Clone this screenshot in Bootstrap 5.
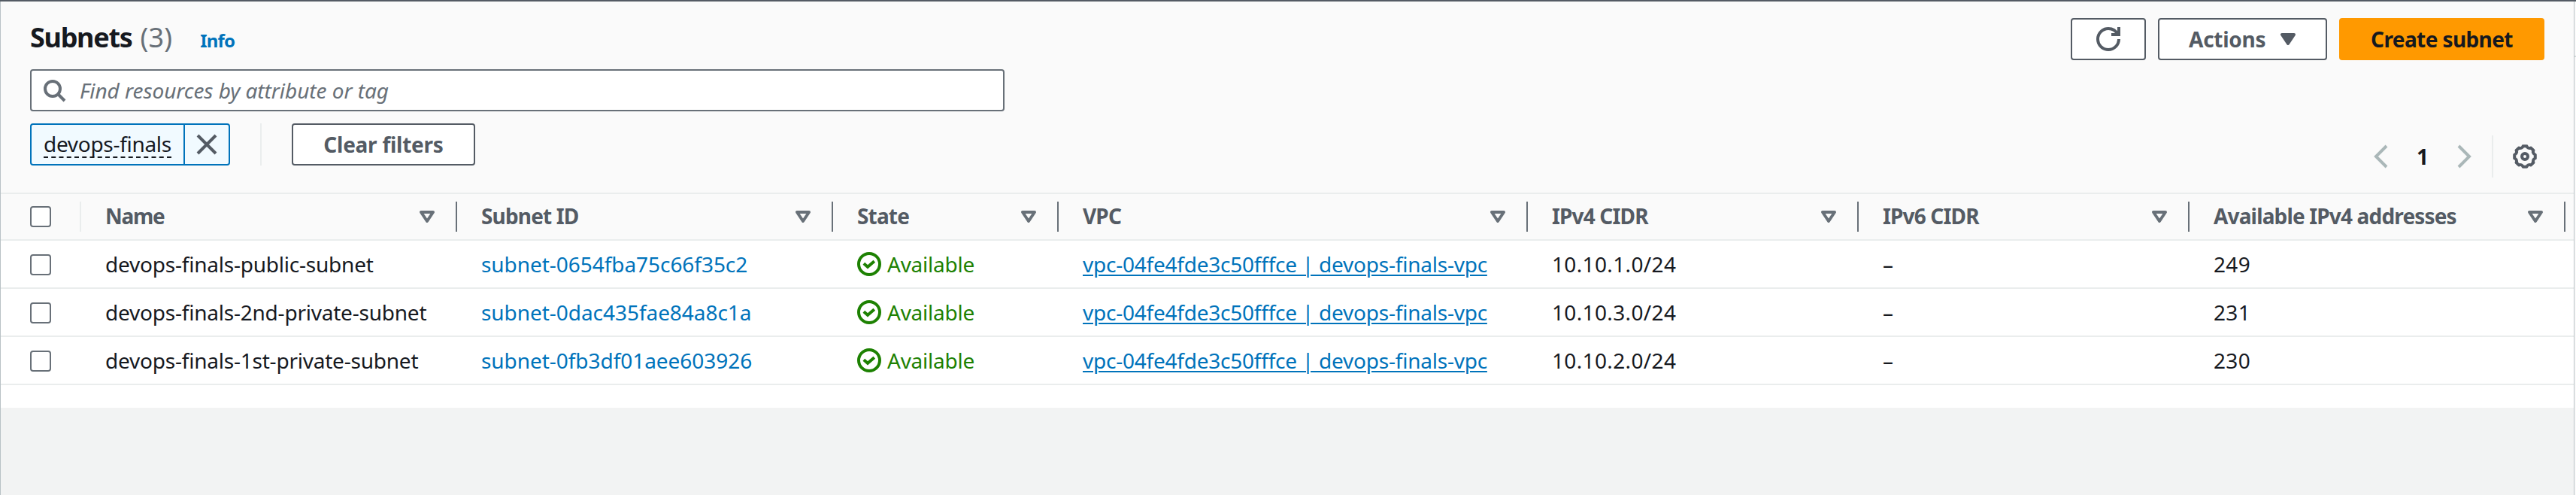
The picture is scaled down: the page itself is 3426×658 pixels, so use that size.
<!DOCTYPE html>
<html lang="en">
<head>
<meta charset="utf-8">
<meta name="viewport" content="width=device-width, initial-scale=1">
<title>Subnets</title>
<link href="https://cdn.jsdelivr.net/npm/bootstrap@5.3.0/dist/css/bootstrap.min.css" rel="stylesheet">
<style>
  :root { --ink:#16191f; --slate:#545b64; --muted:#687078; --line:#eaeded; --blue:#0073bb; --green:#1d8102; }
  body { font-family:"Noto Sans","Open Sans",sans-serif; font-size:28px; line-height:1.3; color:var(--ink); background:#fafafa; overflow:hidden; border-top:2px solid var(--slate); }
  .frame { height:656px; flex:1; background:#f2f3f3; padding:0 1px; border-left:1px solid #b9c2c6; border-right:1px solid #b9c2c6; }
  .frame { padding:0; }
  .edge { width:2px; padding-top:72px; }
  .edge i { display:block; height:2px; background:#d5dbdb; }
  .panel-head { background:#fafafa; padding:22px 39px 20px; border-bottom:2px solid var(--line); height:256px; }
  .ico { width:32px; height:32px; flex:none; fill:none; stroke:currentColor; stroke-width:2; display:block; }
  .title-line { padding-bottom:4px; height:56px; }
  .title { font-size:36px; font-weight:700; letter-spacing:-1.3px; margin:0; line-height:1.3; }
  .title-count { font-size:36px; color:var(--muted); margin-left:11px; letter-spacing:.2px; }
  .info-link { font-size:24px; font-weight:700; color:var(--blue); margin-left:37px; letter-spacing:-.8px; }
  .btn-aws { height:56px; border:2px solid var(--slate); border-radius:4px; background:#fff; color:var(--slate); font-size:28px; font-weight:700; letter-spacing:-.25px; line-height:1; padding:0 0 1px; display:flex; align-items:center; justify-content:center; }
  .btn-refresh { width:100px; padding:0; }
  .btn-actions { width:225px; justify-content:flex-start; padding-left:39px; }
  .btn-actions .ico { fill:currentColor; margin-left:14px; }
  .btn-create { width:273px; background:#f90; border-color:#f90; color:var(--ink); letter-spacing:-.6px; }
  .btn-clear { width:244px; }
  .search-box { width:1296px; height:56px; margin-top:12px; border:2px solid var(--muted); border-radius:4px; background:#fff; color:var(--muted); padding-left:14px; }
  .search-box span { font-style:italic; margin-left:18px; letter-spacing:-.06px; }
  .token { width:266px; height:56px; border:2px solid var(--blue); border-radius:4px; background:#f1faff; }
  .token-text { line-height:34px; border-bottom:2px dashed var(--ink); letter-spacing:-.3px; width:170px; margin-left:16px; white-space:nowrap; }
  .token-close { width:60px; border-left:2px solid var(--blue); color:var(--slate); }
  .rule { width:2px; height:56px; background:var(--line); }
  .filters .rule { margin:0 40px; }
  .pager { color:#aab7b8; height:56px; }
  .pager b { color:var(--ink); width:80px; text-align:center; line-height:1; padding-bottom:1px; }
  .pager .rule { margin:0 26px 0 20px; }
  .gear { color:var(--slate); margin-right:10px; }
  .grid { table-layout:fixed; width:3422px; margin:0; background:#fff; border-collapse:separate; border-spacing:0; }
  .grid th, .grid td { padding:0 0 0 32px; border-bottom:2px solid var(--line); white-space:nowrap; vertical-align:middle; }
  .grid td { height:64px; }
  .grid th { height:62px; background:#fafafa; color:var(--slate); font-weight:700; letter-spacing:-.84px; }
  .grid th:first-child, .grid td:first-child { padding-left:39px; }
  .grid th:last-child { padding-right:11px; }
  .th-text { padding-bottom:2px; }
  .th-name { letter-spacing:-1.3px; }
  .grid th .ico { color:var(--muted); margin-left:auto; margin-right:22px; }
  .sep { width:2px; height:40px; background:var(--muted); flex:none; }
  .sep-light { background:var(--line); margin-left:auto; }
  .tick { width:28px; height:28px; border:2px solid var(--muted); border-radius:4px; background:#fff; display:block; }
  td .tick { margin-top:2px; }
  .c-name { letter-spacing:-.22px; }
  .c-id { color:var(--blue); letter-spacing:-.05px; }
  .c-state { color:var(--green); letter-spacing:-.25px; }
  .c-vpc a { color:var(--blue); letter-spacing:-.23px; text-decoration-thickness:2px; text-underline-offset:3px; }
  .c-num { letter-spacing:.35px; }
  .panel-foot { height:30px; background:#fff; }
</style>
</head>
<body>
<svg class="d-none">
  <symbol id="i-sort" viewBox="0 0 16 16"><path d="M4 5h8l-4 6-4-6z" stroke-linejoin="round"/></symbol>
  <symbol id="i-check" viewBox="0 0 16 16"><circle cx="8" cy="8" r="7"/><path d="M4.4 7.6 7 9.9l4.4-3.8"/></symbol>
</svg>
<div class="d-flex">
<main class="frame">
  <header class="panel-head">
    <div class="d-flex justify-content-between">
      <div class="title-line d-flex align-items-center"><div class="d-flex align-items-baseline">
        <h1 class="title">Subnets</h1><span class="title-count">(3)</span>
        <a class="info-link text-decoration-none">Info</a>
      </div></div>
      <div class="d-flex gap-3">
        <button class="btn-aws btn-refresh" aria-label="Refresh"><svg class="ico" viewBox="0 0 16 16"><path d="M15 8c0 3.87-3.13 7-7 7s-7-3.13-7-7 3.13-7 7-7c2.79 0 5.2 1.63 6.33 4"/><path d="M10 5h5V0"/></svg></button>
        <button class="btn-aws btn-actions">Actions<svg class="ico"><use href="#i-sort"/></svg></button>
        <button class="btn-aws btn-create">Create subnet</button>
      </div>
    </div>
    <div class="d-flex justify-content-between align-items-end">
      <div class="pb-3">
        <div class="search-box d-flex align-items-center"><svg class="ico" viewBox="0 0 16 16"><circle cx="7" cy="7" r="5"/><path d="m15 15-4.5-4.5"/></svg><span>Find resources by attribute or tag</span></div>
        <div class="filters d-flex mt-3">
          <div class="token d-flex align-items-center justify-content-between">
            <span class="token-text">devops-finals</span>
            <span class="token-close h-100 d-flex align-items-center justify-content-center"><svg class="ico" viewBox="0 0 16 16"><path d="m2 2 12 12M14 2 2 14"/></svg></span>
          </div>
          <div class="rule"></div>
          <button class="btn-aws btn-clear">Clear filters</button>
        </div>
      </div>
      <div class="pager d-flex align-items-center">
        <svg class="ico" viewBox="0 0 16 16"><path d="M12 1 5 8l7 7"/></svg><b>1</b>
        <svg class="ico" viewBox="0 0 16 16"><path d="m4 1 7 7-7 7"/></svg>
        <div class="rule"></div>
        <svg class="ico gear" viewBox="0 0 16 16"><path stroke-linejoin="round" d="M14.89 6.78V9.22A1.9 1.9 0 0 0 13.73 12.01L12.01 13.73A1.9 1.9 0 0 0 9.22 14.89H6.78A1.9 1.9 0 0 0 3.99 13.73L2.27 12.01A1.9 1.9 0 0 0 1.11 9.22V6.78A1.9 1.9 0 0 0 2.27 3.99L3.99 2.27A1.9 1.9 0 0 0 6.78 1.11H9.22A1.9 1.9 0 0 0 12.01 2.27L13.73 3.99A1.9 1.9 0 0 0 14.89 6.78Z"/><circle cx="8" cy="8" r="2"/></svg>
      </div>
    </div>
  </header>
  <table class="grid">
    <colgroup><col style="width:107px"><col style="width:500px"><col style="width:500px"><col style="width:300px"><col style="width:624px"><col style="width:440px"><col style="width:440px"><col style="width:511px"></colgroup>
    <thead><tr>
      <th><div class="d-flex align-items-center"><i class="tick"></i><i class="sep sep-light"></i></div></th>
      <th><div class="d-flex align-items-center"><span class="th-text th-name">Name</span><svg class="ico"><use href="#i-sort"/></svg><i class="sep"></i></div></th>
      <th><div class="d-flex align-items-center"><span class="th-text">Subnet ID</span><svg class="ico"><use href="#i-sort"/></svg><i class="sep"></i></div></th>
      <th><div class="d-flex align-items-center"><span class="th-text">State</span><svg class="ico"><use href="#i-sort"/></svg><i class="sep"></i></div></th>
      <th><div class="d-flex align-items-center"><span class="th-text">VPC</span><svg class="ico"><use href="#i-sort"/></svg><i class="sep"></i></div></th>
      <th><div class="d-flex align-items-center"><span class="th-text">IPv4 CIDR</span><svg class="ico"><use href="#i-sort"/></svg><i class="sep"></i></div></th>
      <th><div class="d-flex align-items-center"><span class="th-text">IPv6 CIDR</span><svg class="ico"><use href="#i-sort"/></svg><i class="sep"></i></div></th>
      <th><div class="d-flex align-items-center"><span class="th-text">Available IPv4 addresses</span><svg class="ico"><use href="#i-sort"/></svg><i class="sep"></i></div></th>
    </tr></thead>
    <tbody>
      <tr><td><i class="tick"></i></td><td class="c-name">devops-finals-public-subnet</td><td class="c-id">subnet-0654fba75c66f35c2</td><td class="c-state"><div class="d-flex align-items-center gap-2"><svg class="ico"><use href="#i-check"/></svg>Available</div></td><td class="c-vpc"><a href="#">vpc-04fe4fde3c50fffce | devops-finals-vpc</a></td><td class="c-num">10.10.1.0/24</td><td>–</td><td class="c-num">249</td></tr>
      <tr><td><i class="tick"></i></td><td class="c-name">devops-finals-2nd-private-subnet</td><td class="c-id">subnet-0dac435fae84a8c1a</td><td class="c-state"><div class="d-flex align-items-center gap-2"><svg class="ico"><use href="#i-check"/></svg>Available</div></td><td class="c-vpc"><a href="#">vpc-04fe4fde3c50fffce | devops-finals-vpc</a></td><td class="c-num">10.10.3.0/24</td><td>–</td><td class="c-num">231</td></tr>
      <tr><td><i class="tick"></i></td><td class="c-name">devops-finals-1st-private-subnet</td><td class="c-id">subnet-0fb3df01aee603926</td><td class="c-state"><div class="d-flex align-items-center gap-2"><svg class="ico"><use href="#i-check"/></svg>Available</div></td><td class="c-vpc"><a href="#">vpc-04fe4fde3c50fffce | devops-finals-vpc</a></td><td class="c-num">10.10.2.0/24</td><td>–</td><td class="c-num">230</td></tr>
    </tbody>
  </table>
  <div class="panel-foot"></div>
</main>
<div class="edge"><i></i></div>
</div>
<script src="https://cdn.jsdelivr.net/npm/bootstrap@5.3.0/dist/js/bootstrap.bundle.min.js"></script>
</body>
</html>
